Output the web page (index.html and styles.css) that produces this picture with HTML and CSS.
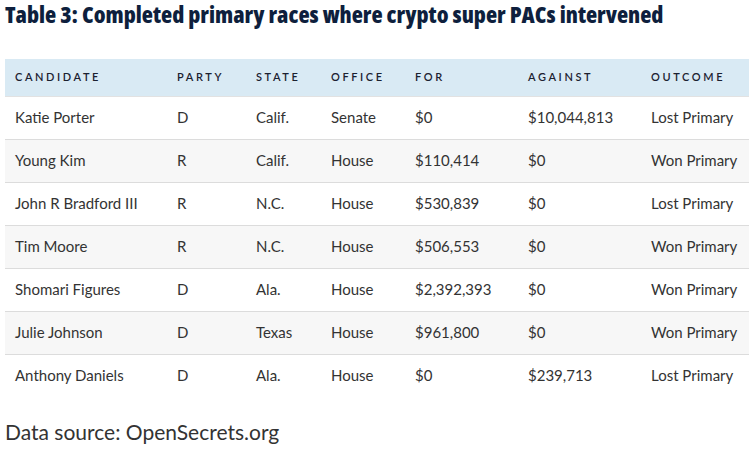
FILE: index.html
```html
<!DOCTYPE html>
<html>
<head>
<meta charset="utf-8">
<link rel="stylesheet" href="styles.css">
</head>
<body>
<div class="page">
  <h1 class="title">Table 3: Completed primary races where crypto super PACs intervened</h1>
  <table class="races">
    <colgroup>
      <col class="c1"><col class="c2"><col class="c3"><col class="c4"><col class="c5"><col class="c6"><col class="c7">
    </colgroup>
    <thead>
      <tr><th>Candidate</th><th>Party</th><th>State</th><th>Office</th><th>For</th><th>Against</th><th>Outcome</th></tr>
    </thead>
    <tbody>
      <tr><td>Katie Porter</td><td>D</td><td>Calif.</td><td>Senate</td><td>$0</td><td>$10,044,813</td><td>Lost Primary</td></tr>
      <tr><td>Young Kim</td><td>R</td><td>Calif.</td><td>House</td><td>$110,414</td><td>$0</td><td>Won Primary</td></tr>
      <tr><td>John R Bradford III</td><td>R</td><td>N.C.</td><td>House</td><td>$530,839</td><td>$0</td><td>Lost Primary</td></tr>
      <tr><td>Tim Moore</td><td>R</td><td>N.C.</td><td>House</td><td>$506,553</td><td>$0</td><td>Won Primary</td></tr>
      <tr><td>Shomari Figures</td><td>D</td><td>Ala.</td><td>House</td><td>$2,392,393</td><td>$0</td><td>Won Primary</td></tr>
      <tr><td>Julie Johnson</td><td>D</td><td>Texas</td><td>House</td><td>$961,800</td><td>$0</td><td>Won Primary</td></tr>
      <tr><td>Anthony Daniels</td><td>D</td><td>Ala.</td><td>House</td><td>$0</td><td>$239,713</td><td>Lost Primary</td></tr>
    </tbody>
  </table>
  <p class="source">Data source: OpenSecrets.org</p>
</div>
</body>
</html>
```

FILE: styles.css
```css
* { box-sizing: border-box; }
html, body { margin: 0; padding: 0; background: #fff; }
.page {
  width: 749px;
  height: 451px;
  overflow: hidden;
  padding: 0 0 0 5px;
}
.title {
  margin: 0;
  padding-top: 0;
  height: 59px;
  font-family: "Open Sans", sans-serif;
  font-stretch: 80%;
  font-weight: 800;
  font-size: 23px;
  line-height: 28px;
  color: #0e1f3d;
  letter-spacing: 0;
  white-space: nowrap;
}
.races {
  width: 744px;
  border-collapse: collapse;
  table-layout: fixed;
  font-family: Lato, "Open Sans", sans-serif;
}
.c1 { width: 162px; }
.c2 { width: 79px; }
.c3 { width: 75px; }
.c4 { width: 84px; }
.c5 { width: 113px; }
.c6 { width: 123px; }
.c7 { width: 108px; }
.races th {
  background: #d9eaf4;
  height: 37px;
  text-align: left;
  padding: 0 0 2px 10px;
  font-size: 11px;
  font-weight: 600;
  letter-spacing: 2.6px;
  text-transform: uppercase;
  color: #1b2130;
  border-bottom: 1px solid #e2e2e2;
}
.races td {
  height: 43px;
  padding: 0 0 2px 10px;
  font-size: 15px;
  color: #333;
  border-bottom: 1px solid #dcdcdc;
  white-space: nowrap;
}
.races tbody tr:nth-child(even) td { background: #f7f7f7; }
.races tbody tr:last-child td { border-bottom: none; }
.source {
  margin: 0;
  padding-top: 22px;
  font-family: Lato, "Open Sans", sans-serif;
  font-size: 21px;
  color: #333;
}
```
